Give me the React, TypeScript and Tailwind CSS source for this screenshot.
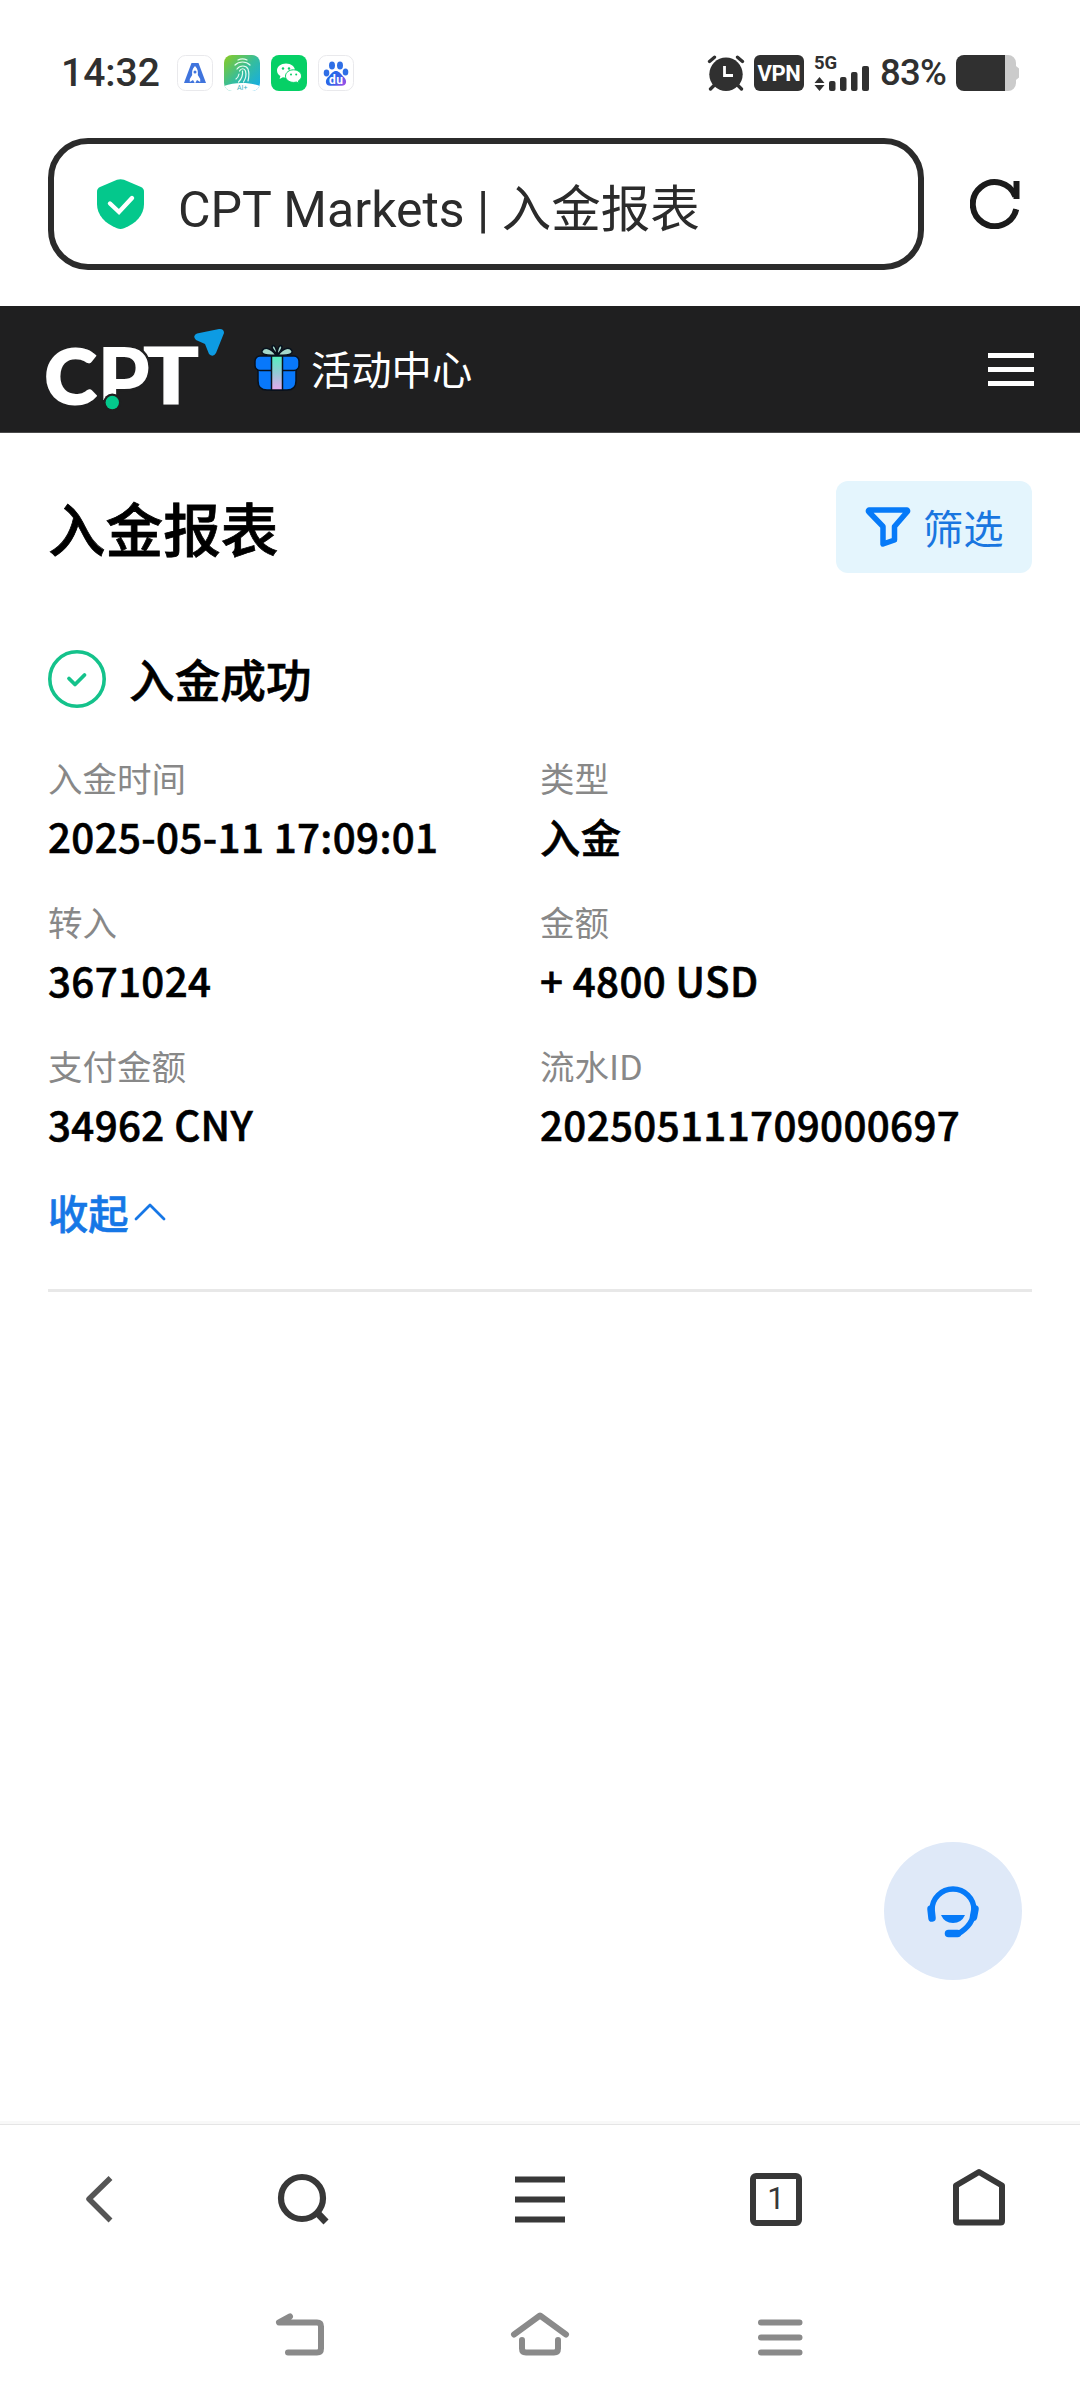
import type { ReactNode } from "react";

const CJK = "font-['Noto_Sans_CJK_SC',sans-serif]";

function StatusBar() {
  return (
    <div className="flex h-[138px] items-start pt-[55px] pl-[61px] pr-[60px] text-[#303030]">
      <span className="h-9 w-[99px] whitespace-nowrap font-[Roboto,sans-serif] text-[39px] leading-[37px] font-medium">14:32</span>
      <div className="ml-[17px] flex gap-[11px]">
        <svg className="h-9 w-9" viewBox="0 0 36 36">
          <rect x="0.5" y="0.5" width="35" height="35" rx="8" fill="#fff" stroke="#e9e9ec" />
          <path d="M14.500 8h7l7.500 20H7z" fill="#3f74dd" />
          <path d="M18 11c3 3 3.200 6 2.800 9l2.400 4v3l-3.200-2-2 3.500-2-3.500-3.200 2v-3l2.400-4c-.4-3-.2-6 2.800-9z" fill="#fff" />
          <circle cx="18" cy="17" r="1.500" fill="#3f74dd" />
        </svg>
        <svg className="h-9 w-9" viewBox="0 0 36 36">
          <defs>
            <linearGradient id="print" x1="0" y1="0" x2="1" y2="1">
              <stop offset="0" stopColor="#8ccb20" />
              <stop offset="0.5" stopColor="#35bd9d" />
              <stop offset="1" stopColor="#10aaf0" />
            </linearGradient>
            <clipPath id="printClip"><rect width="36" height="36" rx="8" /></clipPath>
          </defs>
          <g clipPath="url(#printClip)">
            <rect width="36" height="36" fill="url(#print)" />
            <g fill="none" stroke="#e4fbf0" strokeWidth="1.200" strokeLinecap="round">
              <path d="M14 5c3-1.500 6-1.500 9 0M11 10c4-4 11-4 15 0M13 14c3-4 9-4 11 0 1 3 1 8 0 12M15.500 16c1.500-3 5-3 6 0 1 4 0 8-2 11M18.500 16c.5 4-1 8-4 11M15 19c-.4 2-1.500 4-3 5" />
            </g>
            <path d="M0 31c10-4 26-4 36 0v6H0z" fill="#fff" />
            <text x="13" y="35" fontSize="7" fontFamily="Roboto" fill="#3bb2bd">AI+</text>
          </g>
        </svg>
        <svg className="h-9 w-9" viewBox="0 0 36 36">
          <rect width="36" height="36" rx="8" fill="#06d066" />
          <path d="M15 8.500c-5 0-9 3-9 7 0 2.400 1.300 4.300 3.400 5.600L8.600 24l3.300-1.700c1 .3 2 .4 3.100.4 5 0 9-3.200 9-7.200s-4-7-9-7z" fill="#fff" />
          <path d="M22.500 14.800c-4.400 0-8 2.800-8 6.300s3.600 6.300 8 6.300c1 0 2-.1 2.800-.4l2.700 1.400-.7-2.400c2-1.200 3.200-2.900 3.200-4.900 0-3.500-3.600-6.300-8-6.300z" fill="#fff" stroke="#06d066" />
          <g fill="#06d066"><circle cx="12" cy="13.500" r="1.200" /><circle cx="18" cy="13.500" r="1.200" /><circle cx="20" cy="19.500" r="1" /><circle cx="25.200" cy="19.500" r="1" /></g>
        </svg>
        <svg className="h-9 w-9" viewBox="0 0 36 36">
          <defs><linearGradient id="paw" x1="0" y1="0.4" x2="1" y2="1"><stop offset="0" stopColor="#1f6bea" /><stop offset="0.5" stopColor="#3a63e8" /><stop offset="1" stopColor="#b04be8" /></linearGradient></defs>
          <rect x="0.500" y="0.500" width="35" height="35" rx="8" fill="#fff" stroke="#e9e9ec" />
          <g fill="#2f6fe6"><ellipse cx="8.500" cy="18" rx="2.800" ry="3.400" /><ellipse cx="14" cy="10.500" rx="3" ry="4" /><ellipse cx="22" cy="10.500" rx="3" ry="4" /><ellipse cx="27.500" cy="17" rx="2.800" ry="3.500" /></g>
          <path d="M18 16c3 0 4.500 2.500 6.500 4.700 2.800 2.500 4 4.500 3.500 7-.5 2.300-2.500 3.300-5 3H13c-2.700.3-4.600-.7-5-3-.5-2.500.7-4.500 3.500-7C13.500 18.500 15 16 18 16z" fill="url(#paw)" />
          <text x="11" y="29.200" textLength="14" fontSize="12" fontWeight="700" fontFamily="Roboto" fill="#fff">du</text>
        </svg>
      </div>
      <div className="ml-auto flex items-start">
        <svg className="h-9 w-[38px]" viewBox="0 0 38 36">
          <g stroke="#303030" strokeLinecap="round" strokeWidth="3.300">
            <path d="M2.500 6.500 7.500 2.200M35.500 6.500 30.500 2.200M7 30.500l-3.500 3.500M31 30.500l3.500 3.500" />
          </g>
          <circle cx="19" cy="19.300" r="16.700" fill="#303030" />
          <path d="M17.500 11v9.500h8.500" fill="none" stroke="#fff" strokeWidth="2.800" />
        </svg>
        <span className="ml-[9px] flex h-9 w-[50px] items-center justify-center rounded-[6px] bg-[#303030] pt-[2px] font-[Roboto,sans-serif] text-[22px] leading-[34px] font-bold tracking-[-0.3px] text-white">VPN</span>
        <div className="ml-[10px] h-9 w-[56px]">
          <span className="block h-4 font-[Roboto,sans-serif] text-[18.500px] leading-[16px] font-bold">5G</span>
          <svg className="-mt-[6px] h-[26px] w-[56px]" viewBox="0 0 56 26">
            <g fill="#303030">
              <path d="M5.500 12l5 6h-10zM5.500 26l5-6h-10z" />
              <rect x="15" y="16" width="6.500" height="10" rx="2" /><rect x="26" y="12" width="6.500" height="14" rx="2" /><rect x="37" y="7" width="6.500" height="19" rx="2" /><rect x="48" y="1" width="7" height="25" rx="2" />
            </g>
          </svg>
        </div>
        <span className="ml-[10px] w-[66px] whitespace-nowrap font-[Roboto,sans-serif] text-[36.500px] leading-[36px] font-medium tracking-[-0.8px]">83%</span>
        <svg className="ml-[10px] h-9 w-[64px]" viewBox="0 0 64 36">
          <path d="M48 0h4a8 8 0 0 1 8 8v3l3 2.500v9L60 25v3a8 8 0 0 1-8 8h-4z" fill="#cbcbcb" />
          <path d="M8 0h41v36H8a8 8 0 0 1-8-8V8a8 8 0 0 1 8-8z" fill="#303030" />
        </svg>
      </div>
    </div>
  );
}

function AddressBar() {
  return (
    <div className="flex h-[168px] items-start pl-12">
      <div className="flex h-[132px] w-[876px] items-center rounded-[40px] border-[6px] border-[#2b2b2b] pl-[43px]">
        <svg className="h-[50px] w-[47px]" viewBox="0 0 47 50">
          <path d="M20 .8q3.500-1.300 7 0L44 8q3 1.500 3 4.500V25c0 11-8 19.500-20 24.300q-3.500 1.300-7 0C8 44.500 0 36 0 25V12.500Q0 9.500 3 8z" fill="#04c88c" />
          <path d="M13 24.500l9 8.500 13-14" fill="none" stroke="#fff" strokeWidth="4.400" strokeLinecap="round" />
        </svg>
        <span className="mt-[7px] ml-[34px] whitespace-nowrap font-[Roboto,sans-serif] text-[50px] leading-[64px] text-[#2b2b2b]">
          CPT Markets | <span className={`${CJK} text-[49.500px] leading-[64px]`}>入金报表</span>
        </span>
      </div>
      <svg className="mt-[41px] ml-[46px] h-[50px] w-[50px]" viewBox="0 0 50 50" fill="none" stroke="#1b1b1b" strokeWidth="6">
        <path d="M46.200 30.200A22 22 0 1 1 45.400 17.500" />
        <path d="M46.500 2v18" />
      </svg>
    </div>
  );
}

function Logo() {
  return (
    <svg className="h-[84px] w-[180px]" viewBox="0 0 180 84">
      <g fill="#fff" fontFamily="Lato" fontWeight="900">
        <text x="-1.500" y="76.500" fontSize="77" textLength="52" lengthAdjust="spacingAndGlyphs" stroke="#fff" strokeWidth="2">C</text>
        <text x="97" y="77" fontSize="78" textLength="56" lengthAdjust="spacingAndGlyphs" stroke="#fff" strokeWidth="1">T</text>
        <text x="51" y="84" fontSize="87" textLength="53" lengthAdjust="spacingAndGlyphs" stroke="#1f1f20" strokeWidth="5" paintOrder="stroke">P</text>
      </g>
      <rect x="54" y="73" width="20" height="11" fill="#1f1f20" />
      <circle cx="66.300" cy="75.500" r="9" fill="#1f1f20" />
      <circle cx="66.300" cy="75.500" r="6.700" fill="#04c88c" />
      <path d="M151 6.500 173 2q5-.5 5 4l-8 20q-3 5-7 1l-4-10-9-4q-4-4 1-6.500z" fill="#0d9be3" />
    </svg>
  );
}

function Gift() {
  return (
    <svg className="h-[48px] w-[46px]" viewBox="0 0 46 48" stroke="#07111d" strokeWidth="1.500">
      <defs><linearGradient id="ribbon" x1="0" y1="0" x2="0" y2="1"><stop offset="0" stopColor="#52f2be" /><stop offset="0.500" stopColor="#94c9d6" /><stop offset="1" stopColor="#e4a9ed" /></linearGradient></defs>
      <path d="M4 25h38v12q0 9-9 9H13q-9 0-9-9z" fill="#0878fb" />
      <rect x="1" y="12" width="44" height="14.500" rx="5" fill="#0878fb" />
      <rect x="17.500" y="12" width="11" height="34" fill="url(#ribbon)" />
      <path d="M22 11C16 3 10 3 8 7c-1 3 4 5 14 4zM24 11c6-8 12-8 14-4 1 3-4 5-14 4z" fill="#a5d8ca" />
      <path d="M22.500 10Q16 3 19 1.500q3 0 4 8.500zM24 10q6-7 3-8.500-3 0-4 8.500z" fill="#a5d8ca" />
    </svg>
  );
}

function SiteHeader() {
  return (
    <header className="flex h-[127px] items-center border-b border-[#4a4a4a] bg-[#1f1f20] pl-[46px] pr-[46px]">
      <Logo />
      <div className="-mt-[2px] ml-[28px] flex items-center">
        <Gift />
        <span className={`${CJK} ml-[11px] text-[40.300px] leading-[60px] text-white`}>活动中心</span>
      </div>
      <div className="ml-auto flex w-[46px] flex-col gap-[9px]">
        <i className="h-[5px] bg-white" />
        <i className="h-[5px] bg-white" />
        <i className="h-[5px] bg-white" />
      </div>
    </header>
  );
}

const FIELDS: [string, string][] = [
  ["入金时间", "2025-05-11 17:09:01"],
  ["类型", "入金"],
  ["转入", "3671024"],
  ["金额", "+ 4800 USD"],
  ["支付金额", "34962 CNY"],
  ["流水ID", "202505111709000697"],
];

function Report() {
  return (
    <main className={`${CJK} flex h-[1688px] flex-col px-12 pt-12 text-black`}>
      <div className="flex h-[92px] items-center justify-between">
        <h1 className="text-[57.600px] leading-[86px] font-medium [-webkit-text-stroke:0.8px]">入金报表</h1>
        <button className="flex h-[92px] w-[196px] items-center rounded-[12px] bg-[#e4f5fd] pl-[29px] text-[#1976e0]">
          <svg className="-mt-[1px] h-[42px] w-[46px]" viewBox="0 0 46 42" fill="none" stroke="#067af8" strokeWidth="5.500" strokeLinejoin="round">
            <path d="M4 4h38q1 1 0 2L29.500 20.500V34L18 38V20.500L4 6q-1-1 0-2z" />
          </svg>
          <span className="ml-[12px] text-[40.300px] leading-[60px]">筛选</span>
        </button>
      </div>
      <div className="mt-[77px] flex h-[58px] items-center">
        <svg className="h-[58px] w-[58px]" viewBox="0 0 58 58" fill="none" stroke="#14c28b">
          <circle cx="29" cy="29" r="27.200" strokeWidth="3.600" />
          <path d="M21 28.500l6 6 9.500-9.500" strokeWidth="3.800" strokeLinecap="round" strokeLinejoin="round" />
        </svg>
        <h2 className="-mt-[1px] ml-[23px] text-[45.700px] leading-[69px] font-medium [-webkit-text-stroke:0.6px]">入金成功</h2>
      </div>
      <dl className="mt-[43px] grid grid-cols-2">
        {FIELDS.map(([label, value]) => (
          <div key={label} className="h-[144px]">
            <dt className="text-[34.500px] leading-[52px] text-[#888]">{label}</dt>
            <dd className="mt-[3px] whitespace-nowrap text-[40.300px] leading-[60px] font-medium tracking-[0.37px] [-webkit-text-stroke:0.6px]">{value}</dd>
          </div>
        ))}
      </dl>
      <div className="-mt-[1px] flex h-[60px] items-center text-[#1677e6]">
        <span className="text-[40.300px] leading-[60px] font-medium [-webkit-text-stroke:0.6px]">收起</span>
        <svg className="ml-[5px] h-[18px] w-[32px]" viewBox="0 0 32 18" fill="none" stroke="#1677e6" strokeWidth="2.800" strokeLinecap="round" strokeLinejoin="round">
          <path d="M2 16 16 2l14 14" />
        </svg>
      </div>
      <div className="mt-[47px] h-[3px] shrink-0 bg-[#e8e8e8]" />
      <button className="mt-[550px] mr-[10px] flex h-[138px] w-[138px] shrink-0 items-center justify-center self-end rounded-full bg-[#dfe9f8]">
        <svg className="h-[54px] w-[54px]" viewBox="0 0 54 54" fill="none" stroke="#067af8">
          <path d="M6 26a21 21 0 0 1 42 0c0 10-6 18-16 24" strokeWidth="5.400" />
          <path d="M5 25l1 9M49 25l-1.500 8" strokeWidth="7.500" strokeLinejoin="round" strokeLinecap="round" />
          <path d="M15 31h24q-3.500 8-12 8t-12-8z" fill="#067af8" stroke="none" />
          <path d="M22.500 49.500h9" strokeWidth="7.500" strokeLinecap="round" />
        </svg>
      </button>
    </main>
  );
}

function Slot({ width, children }: { width: string; children: ReactNode }) {
  return <div className={`flex justify-center ${width}`}>{children}</div>;
}

function BrowserNav() {
  return (
    <nav className="flex h-[155px] items-start border-t border-[#e5e5e5] pt-[41px]">
      <Slot width="w-[198px]">
        <svg className="h-[64px] w-[64px]" viewBox="67 2166 64 64" fill="none" stroke="#555" strokeWidth="5.500">
          <path d="M110.500 2178 89 2199l21.500 21.500" strokeLinejoin="round" />
        </svg>
      </Slot>
      <Slot width="w-[208px]">
        <svg className="h-[64px] w-[64px]" viewBox="270 2166 64 64" fill="none" stroke="#383838" strokeWidth="6.200">
          <circle cx="302" cy="2198" r="21" />
          <path d="M316 2211.500 326 2222" strokeWidth="7" />
        </svg>
      </Slot>
      <Slot width="w-[268px]">
        <svg className="h-[64px] w-[64px]" viewBox="508 2166 64 64" fill="none" stroke="#383838" strokeWidth="6.200">
          <path d="M515 2179.500h50M515 2199.500h50M515 2219.500h50" />
        </svg>
      </Slot>
      <Slot width="w-[204px]">
        <div className="mt-[7px] flex h-[53px] w-[52px] items-center justify-center rounded-[6px] border-[6px] border-[#383838] pb-[2px] font-[Roboto,sans-serif] text-[31px] leading-[38px] text-[#383838]">1</div>
      </Slot>
      <Slot width="w-[202px]">
        <svg className="h-[64px] w-[64px]" viewBox="947 2166 64 64" fill="none" stroke="#383838" strokeWidth="6" strokeLinejoin="round">
          <path d="M956 2185.500 979 2172l23 13.500V2221q0 1.500-1.500 1.500h-43q-1.500 0-1.500-1.500z" />
        </svg>
      </Slot>
    </nav>
  );
}

function SystemNav() {
  return (
    <nav className="flex h-[121px] items-start pt-[26px] pl-[268px]">
      <svg className="h-[60px] w-[64px]" viewBox="268 2305 64 60" fill="none" stroke="#8a8a8a" strokeWidth="6" strokeLinecap="round" strokeLinejoin="round">
        <path d="M290 2316.500 279 2322.500h38q4 0 4 4v22q0 4-4 4h-29" />
      </svg>
      <svg className="ml-[176px] h-[60px] w-[64px]" viewBox="508 2305 64 60" fill="none" stroke="#8a8a8a" strokeWidth="6" strokeLinecap="round" strokeLinejoin="round">
        <path d="M514 2334.500 540 2315.500l26 19M522 2340v8.500q0 4 4 4h28q4 0 4-4V2340" />
      </svg>
      <svg className="ml-[176px] h-[60px] w-[64px]" viewBox="748 2305 64 60" fill="none" stroke="#8a8a8a" strokeWidth="6" strokeLinecap="round">
        <path d="M761 2322.500h38.500M761 2337.500h38.500M761 2352.500h38.500" />
      </svg>
    </nav>
  );
}

export default function App() {
  return (
    <div className="flex h-[2400px] w-[1080px] flex-col overflow-hidden bg-white">
      <StatusBar />
      <AddressBar />
      <SiteHeader />
      <Report />
      <div className="h-[3px] bg-[#f8f8f8]" />
      <BrowserNav />
      <SystemNav />
    </div>
  );
}
